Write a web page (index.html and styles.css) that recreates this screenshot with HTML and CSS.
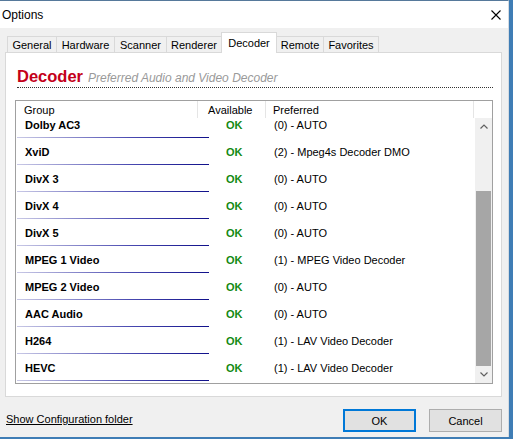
FILE: index.html
```
<!DOCTYPE html>
<html>
<head>
<meta charset="utf-8">
<title>Options</title>
<link rel="stylesheet" href="styles.css">
</head>
<body>
<div class="window">
  <div class="titlebar">
    <span class="title">Options</span>
    <svg class="close" width="10" height="10" viewBox="0 0 10 10"><path d="M0.5 0.5 L9.5 9.5 M9.5 0.5 L0.5 9.5" stroke="#000" stroke-width="1.1" fill="none"/></svg>
  </div>
  <div class="client">
    <div class="tabs">
      <div class="tab t-general">General</div>
      <div class="tab t-hardware">Hardware</div>
      <div class="tab t-scanner">Scanner</div>
      <div class="tab t-renderer">Renderer</div>
      <div class="tab t-decoder active">Decoder</div>
      <div class="tab t-remote">Remote</div>
      <div class="tab t-favorites">Favorites</div>
    </div>
    <div class="page">
      <div class="heading">
        <span class="h-main">Decoder</span>
        <span class="h-sub">Preferred Audio and Video Decoder</span>
      </div>
      <div class="list">
        <div class="list-head">
          <div class="hc hc-group">Group</div>
          <div class="hc hc-avail">Available</div>
          <div class="hc hc-pref">Preferred</div>
          <div class="hc hc-end"></div>
        </div>
        <div class="list-body">
          <div class="viewport">
            <div class="rows">
              <div class="row"><div class="cells"><span class="g">Dolby AC3</span><span class="ok">OK</span><span class="p">(0) - AUTO</span></div><div class="uline"></div></div>
              <div class="row"><div class="cells"><span class="g">XviD</span><span class="ok">OK</span><span class="p">(2) - Mpeg4s Decoder DMO</span></div><div class="uline"></div></div>
              <div class="row"><div class="cells"><span class="g">DivX 3</span><span class="ok">OK</span><span class="p">(0) - AUTO</span></div><div class="uline"></div></div>
              <div class="row"><div class="cells"><span class="g">DivX 4</span><span class="ok">OK</span><span class="p">(0) - AUTO</span></div><div class="uline"></div></div>
              <div class="row"><div class="cells"><span class="g">DivX 5</span><span class="ok">OK</span><span class="p">(0) - AUTO</span></div><div class="uline"></div></div>
              <div class="row"><div class="cells"><span class="g">MPEG 1 Video</span><span class="ok">OK</span><span class="p">(1) - MPEG Video Decoder</span></div><div class="uline"></div></div>
              <div class="row"><div class="cells"><span class="g">MPEG 2 Video</span><span class="ok">OK</span><span class="p">(0) - AUTO</span></div><div class="uline"></div></div>
              <div class="row"><div class="cells"><span class="g">AAC Audio</span><span class="ok">OK</span><span class="p">(0) - AUTO</span></div><div class="uline"></div></div>
              <div class="row"><div class="cells"><span class="g">H264</span><span class="ok">OK</span><span class="p">(1) - LAV Video Decoder</span></div><div class="uline"></div></div>
              <div class="row"><div class="cells"><span class="g">HEVC</span><span class="ok">OK</span><span class="p">(1) - LAV Video Decoder</span></div><div class="uline"></div></div>
            </div>
          </div>
          <div class="scrollbar">
            <div class="sb-btn"><svg width="8" height="5" viewBox="0 0 8 5"><path d="M0.5 4.5 L4 1 L7.5 4.5" stroke="#606060" stroke-width="1.2" fill="none"/></svg></div>
            <div class="sb-track"><div class="sb-thumb"></div></div>
            <div class="sb-btn"><svg width="8" height="5" viewBox="0 0 8 5"><path d="M0.5 0.5 L4 4 L7.5 0.5" stroke="#606060" stroke-width="1.2" fill="none"/></svg></div>
          </div>
        </div>
      </div>
    </div>
    <div class="footer">
      <span class="link">Show Configuration folder</span>
      <div class="buttons">
        <div class="btn btn-default">OK</div>
        <div class="btn">Cancel</div>
      </div>
    </div>
  </div>
</div>
</body>
</html>
```
FILE: styles.css
```
* { box-sizing: border-box; }
html, body { margin: 0; padding: 0; }
body {
  width: 513px;
  height: 439px;
  overflow: hidden;
  background: #3f7db5;
  font-family: "Liberation Sans", Arial, sans-serif;
  font-size: 11px;
  color: #000;
}
.window {
  width: 509px;
  height: 437px;
  background: #f0f0f0;
  border-top: 1px solid #56799b;
  border-right: 1px solid #d4dbe2;
  display: flex;
  flex-direction: column;
}
.titlebar {
  flex: none;
  height: 27px;
  background: #fff;
  display: flex;
  align-items: center;
  justify-content: space-between;
  padding: 0 7px 0 2px;
}
.title { font-size: 12px; }
.close { display: block; }
.client {
  flex: 1;
  display: flex;
  flex-direction: column;
  padding: 4px 6px 0 5px;
}
.tabs {
  display: flex;
  align-items: flex-end;
  height: 20px;
  padding-left: 2px;
}
.tab {
  height: 16px;
  border: 1px solid #d9d9d9;
  border-bottom: none;
  margin-left: -1px;
  display: flex;
  align-items: center;
  justify-content: center;
  background: #f0f0f0;
  line-height: 14px;
  padding-top: 1px;
}
.tab:first-child { margin-left: 0; }
.t-general { width: 50px; }
.t-hardware { width: 59px; }
.t-scanner { width: 53px; }
.t-renderer { width: 56px; }
.t-decoder { width: 56px; }
.t-remote { width: 48px; }
.t-favorites { width: 56px; }
.tab.active {
  height: 21px;
  margin-bottom: -1px;
  background: #fff;
  position: relative;
  z-index: 1;
  align-items: flex-start;
  padding-top: 3px;
}
.page {
  flex: none;
  height: 345px;
  background: #fff;
  border: 1px solid #d9d9d9;
  padding: 13px 8px 0 9px;
}
.heading {
  margin-left: 2px;
  height: 22px;
  padding-bottom: 1px;
  border-bottom: 1px dotted #333;
  display: flex;
  align-items: baseline;
  gap: 5px;
  line-height: 20px;
}
.h-main {
  font-size: 16.5px;
  font-weight: bold;
  color: #c4001a;
}
.h-sub {
  font-size: 12px;
  font-style: italic;
  color: #9a9a9a;
}
.list {
  margin-top: 12px;
  height: 284px;
  border: 1px solid #a0a0a0;
  display: flex;
  flex-direction: column;
}
.list-head {
  flex: none;
  height: 17px;
  display: flex;
  line-height: 15px;
  padding-top: 2px;
}
.hc { border-right: 1px solid #e5e5e5; margin-top: -2px; padding-top: 2px; }
.hc-group { width: 182px; padding-left: 8px; }
.hc-avail { width: 68px; padding-left: 10px; }
.hc-pref { width: 208px; padding-left: 7px; }
.hc-end { flex: 1; border-right: none; }
.list-body {
  flex: 1;
  display: flex;
  min-height: 0;
}
.viewport {
  flex: 1;
  overflow: hidden;
}
.rows { margin-top: -7px; }
.row {
  height: 27px;
  display: flex;
  flex-direction: column;
}
.cells {
  height: 26px;
  display: grid;
  grid-template-columns: 182px 68px 1fr;
  align-items: center;
  padding-top: 1px;
}
.g { padding-left: 9px; font-weight: bold; font-size: 11px; }
.ok { padding-left: 28px; font-weight: bold; font-size: 11px; color: #138a13; }
.p { padding-left: 8px; }
.uline {
  height: 1px;
  width: 192px;
  margin-left: 1px;
  background: linear-gradient(to right, #c9c9e6, #4848b0 60%, #10108a);
}
.scrollbar {
  flex: none;
  width: 17px;
  background: #f0f0f0;
  display: flex;
  flex-direction: column;
}
.sb-btn {
  height: 17px;
  display: flex;
  align-items: center;
  justify-content: center;
}
.sb-btn svg { display: block; }
.sb-track {
  flex: 1;
  display: flex;
  flex-direction: column;
  justify-content: flex-end;
}
.sb-thumb {
  height: 175px;
  margin: 0 1px;
  background: #a6a6a6;
}
.footer {
  flex: 1;
  display: flex;
  align-items: flex-start;
  padding: 12px 0 0 1px;
}
.link {
  text-decoration: underline;
  line-height: 20px;
  font-size: 11px;
}
.buttons {
  margin-left: auto;
  display: flex;
  gap: 13px;
}
.btn {
  width: 73px;
  height: 23px;
  background: #e1e1e1;
  border: 1px solid #adadad;
  display: flex;
  align-items: center;
  justify-content: center;
}
.btn-default {
  border-color: #0078d7;
  box-shadow: inset 0 0 0 1px #0078d7;
}
```
